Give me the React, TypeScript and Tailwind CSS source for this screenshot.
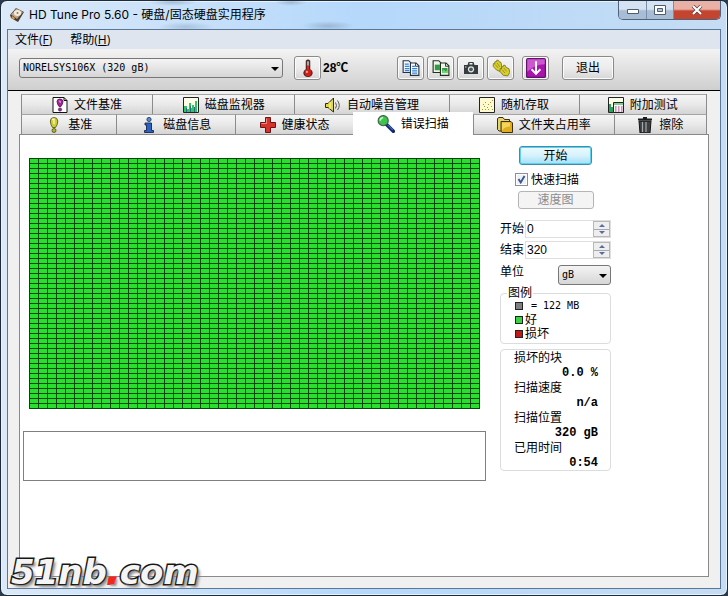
import { useState } from "react";
import type { ReactNode } from "react";

const toolButton =
  "flex items-center justify-center h-6 rounded-[3px] border border-[#8a8a8a] bg-linear-to-b from-[#f4f4f4] via-[#ececec] to-[#d6d6d6] shadow-[inset_0_0_0_1px_#fbfbfb]";

interface IconProps {
  children: ReactNode;
  size?: string;
}

function Icon({ children, size = "size-4" }: IconProps) {
  return (
    <svg viewBox="0 0 16 16" className={`${size} shrink-0`} aria-hidden="true">
      {children}
    </svg>
  );
}

const DiskIcon = () => (
  <Icon>
    <path d="M1 8 7 1l8 4-6 10-7-4z" fill="#4a3a30" />
    <path d="M2 7.500 7.500 1.500 14 5 8 12z" fill="#b9a58c" />
    <ellipse cx="8.500" cy="6" rx="3.600" ry="3" fill="#f4ead8" />
    <circle cx="8.500" cy="6" r="1" fill="#8d7c68" />
    <path d="m3 9 3 2-1 1.500L2.500 11z" fill="#e59a3a" />
  </Icon>
);

const ThermometerIcon = () => (
  <Icon size="size-[18px]">
    <path d="M6 1.500Q8-.5 10 1.500V9q2.200 1 2.200 3.500Q11.500 16 8 16t-4.200-3.500Q4 10 6 9z" fill="#4e2020" />
    <path d="M7 2h2v4H7z" fill="#a4a8ac" />
    <path d="M7 6h2v5H7z" fill="#d92c20" />
    <circle cx="8" cy="12.300" r="3.100" fill="#cf1f1a" />
    <circle cx="7" cy="11.500" r="1" fill="#ff9c8c" />
  </Icon>
);

const CopyTextIcon = () => (
  <Icon size="size-[18px]">
    <path d="M1 1.500h5l2 2V12H1z" fill="#f5faff" stroke="#26343f" />
    <path d="M2.500 4.500H6M2.500 6.500h4M2.500 8.500h4M2.500 10.300h4" stroke="#3482d8" />
    <path d="M7.500 3.500h5l2.500 2.500v8.500H7.500z" fill="#f5faff" stroke="#26343f" />
    <path d="M12 3.500v3h3" fill="none" stroke="#26343f" strokeWidth=".8" />
    <path d="M9 6.500h2.500M9 8.500h4.500M9 10.500h4.500M9 12.500h4.500" stroke="#3482d8" />
  </Icon>
);

const CopyImageIcon = () => (
  <Icon size="size-[18px]">
    <path d="M1 1.500h5l2 2V12H1z" fill="#eef7ee" stroke="#22301f" />
    <path d="M2.500 5h4.500v5H2.500z" fill="#339b43" />
    <path d="M7.500 3.500h5l2.500 2.500v8.500H7.500z" fill="#eef7ee" stroke="#22301f" />
    <path d="M12 3.500v3h3" fill="none" stroke="#22301f" strokeWidth=".8" />
    <path d="M9 8h4.800v4.500H9z" fill="#2f9a40" />
    <path d="m9 11 1.500-2 1.500 2 1.800-1.500v3H9z" fill="#77d26c" />
  </Icon>
);

const CameraIcon = () => (
  <Icon>
    <path d="M4.500 5 5.500 2h5l1 3H15v9H1V5z" fill="#373d3f" />
    <path d="M6.500 3h3v1.500h-3z" fill="#eef2f3" />
    <circle cx="8" cy="9.300" r="3.100" fill="#e4e9ea" />
    <circle cx="8" cy="9.300" r="1.900" fill="#4d5659" />
    <path d="M2 7h1.500" stroke="#cdd3d4" />
  </Icon>
);

const HandsIcon = () => (
  <Icon size="size-[18px]">
    <g fill="#d8cf2d" stroke="#706a14" strokeWidth=".7" strokeLinejoin="round">
      <path d="M1 6.500 1.300 4l1.200.3V2.500L4 2.300 4.300 1l1.500.2.700 1.300L8 3l1 5-2 3-3-1.200z" />
      <path d="M7 11 7.300 8.500l1.200.3V7l1.500-.2.300-1.300 1.500.2.700 1.800 2.500 1 .8 3.500L14 15l-4-.5z" />
    </g>
    <path d="m3 5 2.500 3M4.500 3.500 7 7M9 9.500l2.500 3M10.500 8l2.500 3" stroke="#8b841b" strokeWidth=".7" />
  </Icon>
);

const DownIcon = () => (
  <Icon size="size-5">
    <rect x=".5" y=".5" width="15" height="15" rx="1" fill="#a914ad" stroke="#62116b" />
    <path d="M1 1h14v4Q7 5 1 11z" fill="#cb58cf" />
    <path d="M8 2.500v10M4.500 9 8 12.700 11.500 9" fill="none" stroke="#fff" strokeWidth="1.600" />
  </Icon>
);

const FileBenchmarkIcon = () => (
  <Icon>
    <path d="M1 .5h11L15 3.500v12H1z" fill="#fff" stroke="#111" />
    <path d="M12 .5v3h3" fill="none" stroke="#111" />
    <path d="M8 2Q5 2 5 4.500 5.500 8 7 9.500h2Q10.800 7 11 4.500 10.800 2 8 2z" fill="#a3219e" stroke="#4b104d" strokeWidth=".8" />
    <circle cx="8" cy="12.500" r="1.600" fill="#a3219e" stroke="#4b104d" strokeWidth=".7" />
    <path d="M6.700 4h1.500v2" fill="none" stroke="#e9a2e5" />
  </Icon>
);

const MonitorIcon = () => (
  <Icon>
    <path d="M.5.5h15v15H.5z" fill="#fbfde8" stroke="#222" />
    <path d="M1 15V9h3v3h2V6h2v5h1V8h2v3h1V4h2v11z" fill="#35c267" />
    <path d="M3 15v-4h1v4zm4 0V9h1v6zm4 0v-5h1v5z" fill="#23707e" />
  </Icon>
);

const SpeakerIcon = () => (
  <Icon>
    <path d="M.5 6.500H3L8.500 1v14L3 10.500H.5z" fill="#e1d842" stroke="#2c2a0c" strokeLinejoin="round" />
    <path d="M5 5v7" stroke="#fffb9c" />
    <path d="M10.500 5.500q2 3 0 6M12.500 3.500q3.500 5 0 9.500" fill="none" stroke="#555" />
  </Icon>
);

const RandomIcon = () => (
  <Icon>
    <path d="M.5.5h15v15H.5z" fill="#fdfad0" stroke="#222" />
    <path
      d="M3 12h1v1H3zm2-3h1v1H5zm1 3h1v1H6zm2-2h1v1H8zm1 2h1v1H9zm-5-5h1v1H4zm5 0h1v1H9zm2-2h1v1h-1zm2-2h1v1h-1zm-1 6h1v1h-1zm1 3h1v1h-1zM6 5h1v1H6z"
      fill="#b39435"
    />
  </Icon>
);

const ExtraIcon = () => (
  <Icon>
    <path d="M.5.500h15v15H.5z" fill="#fbfde8" stroke="#222" />
    <path d="M1 7h2v3h2v5H1z" fill="#28a35b" />
    <path d="M5.500 5.500h10v10h-10z" fill="#f8f1f5" stroke="#222" />
    <path d="M6 6h9v2H6z" fill="#7bcd93" />
    <path d="M7 10h1.500M10 10h1.500M13 10h1.500M7 12h1.500M10 12h1.500M13 12h1.500M7 14h1.500M10 14h1.500M13 14h1.500" stroke="#a33b78" />
  </Icon>
);

const BenchmarkIcon = () => (
  <Icon>
    <path d="M8 .500Q4.500.5 4.300 4 4.600 8 6.500 10.500h3Q11.600 8 11.800 4 11.500.5 8 .500z" fill="#cfce36" stroke="#4b4a12" strokeWidth=".8" />
    <path d="M6 2.500 8 2v5" fill="none" stroke="#fbfbb0" strokeWidth="1.300" />
    <circle cx="8" cy="13.500" r="2" fill="#b3b22c" stroke="#4b4a12" strokeWidth=".8" />
  </Icon>
);

const InfoIcon = () => (
  <Icon>
    <circle cx="8" cy="2.500" r="2.100" fill="#4a93d8" stroke="#172c49" strokeWidth=".8" />
    <path d="M4 6h6.500v7.500h2v2h-9v-2h2V8H4z" fill="#2a62c2" stroke="#14274d" strokeWidth=".9" />
  </Icon>
);

const HealthIcon = () => (
  <Icon>
    <path d="M5.500.5h5v5h5v5h-5v5h-5v-5h-5v-5h5z" fill="#d8312c" stroke="#6b1513" />
    <path d="M6.500 1.500v5h-5" fill="none" stroke="#f28a80" />
  </Icon>
);

const SearchIcon = () => (
  <Icon size="size-[18px]">
    <path d="m8.500 8.500 6 6" stroke="#152a6c" strokeWidth="3.200" strokeLinecap="round" />
    <path d="m9.500 8.800 4.500 4.500" stroke="#4268cc" />
    <circle cx="5.500" cy="5" r="4.500" fill="#3fc44c" stroke="#3b634b" />
    <path d="M2.800 5Q3 2.500 5.500 2.200" fill="none" stroke="#c6f8c3" strokeWidth="1.500" />
  </Icon>
);

const FolderIcon = () => (
  <Icon>
    <path d="M.5 1.500 2 .5h4l1.500 2h5v11.500H2L.5 12.500z" fill="#e6d26e" stroke="#3a300b" />
    <path d="M4 4.500h10l1.500 1.500v9.500H5L4 14z" fill="#e0ad1f" stroke="#3a300b" />
    <path d="M5 5.500h8v4q-5 0-8 4z" fill="#f4d45a" />
  </Icon>
);

const TrashIcon = () => (
  <Icon>
    <path d="M1 2.500h14M6 1h4" stroke="#1c1c1c" strokeWidth="2" />
    <path d="M2 4h12l-1 12H3z" fill="#3d4042" stroke="#151515" />
    <path d="M5.500 5v10M9 5v10" stroke="#a7abad" strokeWidth="1.200" />
  </Icon>
);

const fileTabs = [
  { label: "文件基准", icon: <FileBenchmarkIcon />, grow: "flex-[131]" },
  { label: "磁盘监视器", icon: <MonitorIcon />, grow: "flex-[142]" },
  { label: "自动噪音管理", icon: <SpeakerIcon />, grow: "flex-[154]" },
  { label: "随机存取", icon: <RandomIcon />, grow: "flex-[130]" },
  { label: "附加测试", icon: <ExtraIcon />, grow: "flex-[127]" },
];

const diskTabs = [
  { label: "基准", icon: <BenchmarkIcon />, grow: "flex-[95]" },
  { label: "磁盘信息", icon: <InfoIcon />, grow: "flex-[119]" },
  { label: "健康状态", icon: <HealthIcon />, grow: "flex-[117]" },
  { label: "错误扫描", icon: <SearchIcon />, grow: "flex-[121]", active: true },
  { label: "文件夹占用率", icon: <FolderIcon />, grow: "flex-[141]" },
  { label: "擦除", icon: <TrashIcon />, grow: "flex-[92]" },
];

interface TabProps {
  label: string;
  icon: ReactNode;
  grow: string;
  active?: boolean;
}

function Tab({ label, icon, grow, active }: TabProps) {
  const look = active
    ? "relative z-10 -mt-0.5 -mb-px bg-white"
    : "border-t border-l border-[#8b8b8b] border-t-[#a5a5a5] bg-linear-to-b from-[#f5f5f5] via-[#e9e9e9] to-[#d4d4d4]";
  return (
    <button
      type="button"
      role="tab"
      aria-selected={!!active}
      className={`flex items-center justify-center gap-1.5 whitespace-nowrap ${grow} ${look}`}
    >
      {icon}
      {label}
    </button>
  );
}

function DropArrow() {
  return (
    <svg viewBox="0 0 8 4" className="pointer-events-none absolute right-1 top-1/2 -mt-px h-1 w-2" aria-hidden="true">
      <path d="M0 0h8L4 4z" fill="#000" />
    </svg>
  );
}

interface SpinFieldProps {
  id: string;
  label: string;
  initial: number;
}

function SpinField({ id, label, initial }: SpinFieldProps) {
  const [value, setValue] = useState(initial);
  return (
    <div className="flex h-[18px] items-center">
      <label htmlFor={id} className="w-[25px] shrink-0 whitespace-nowrap">
        {label}
      </label>
      <div className="flex h-full min-w-0 flex-1 border border-[#dedede] bg-white">
        <input
          id={id}
          value={value}
          onChange={(e) => setValue(Number(e.target.value) || 0)}
          className="min-w-0 flex-1 px-px font-['Liberation_Sans',sans-serif] outline-none"
        />
        <div className="flex w-[17px] flex-col border border-[#b8b8b8] bg-[#eeeeee]">
          <button
            type="button"
            aria-label={`${label} +`}
            onClick={() => setValue(value + 1)}
            className="flex flex-1 items-center justify-center border-b border-[#a5a8b2]"
          >
            <svg viewBox="0 0 6 3" className="h-[3px] w-1.5">
              <path d="M0 3h6L3 0z" fill="#5a6c98" />
            </svg>
          </button>
          <button
            type="button"
            aria-label={`${label} -`}
            onClick={() => setValue(Math.max(0, value - 1))}
            className="flex flex-1 items-center justify-center"
          >
            <svg viewBox="0 0 6 3" className="h-[3px] w-1.5">
              <path d="M0 0h6L3 3z" fill="#5a6c98" />
            </svg>
          </button>
        </div>
      </div>
    </div>
  );
}

function TitleBar() {
  return (
    <header className="flex h-7 items-start justify-between rounded-t-[6px] bg-[radial-gradient(ellipse_28px_5px_at_185px_26px,#7c95b166,transparent),radial-gradient(ellipse_26px_5px_at_327px_25px,#7c95b180,transparent),radial-gradient(ellipse_24px_4px_at_172px_1px,#7c95b180,transparent),radial-gradient(ellipse_16px_4px_at_290px_1px,#7c95b180,transparent)]">
      <h1 className="flex h-7 items-center gap-1 pl-2 font-['Inter','Noto_Sans_CJK_SC',sans-serif] text-xs">
        <DiskIcon />
        HD Tune Pro 5.60 - 硬盘/固态硬盘实用程序
      </h1>
      <div className="mr-1.5 flex h-[19px] w-[103px] overflow-hidden rounded-b-[5px] border border-t-0 border-[#4f6279]">
        <button
          type="button"
          aria-label="最小化"
          className="flex flex-[28] items-center justify-center border-r border-[#7c8ea5] bg-linear-to-b from-[#d5e2f1] from-45% to-[#a7bcd5] to-55%"
        >
          <svg viewBox="0 0 14 10" className="h-2.5 w-3.5">
            <path d="M1.500 4.500h11v4h-11z" fill="#fff" stroke="#515c6b" />
          </svg>
        </button>
        <button
          type="button"
          aria-label="最大化"
          className="flex flex-[26] items-center justify-center border-r border-[#7c8ea5] bg-linear-to-b from-[#d5e2f1] from-45% to-[#a7bcd5] to-55%"
        >
          <svg viewBox="0 0 12 10" className="h-2.5 w-3">
            <path d="M.5.5h11v9H.5z" fill="#fff" stroke="#515c6b" />
            <path d="M3.500 3.500h5v3h-5z" fill="#b5c7dc" stroke="#515c6b" />
          </svg>
        </button>
        <button
          type="button"
          aria-label="关闭"
          className="flex flex-[47] items-center justify-center bg-linear-to-b from-[#e9b1a6] from-45% to-[#c4452f] to-55%"
        >
          <svg viewBox="0 0 12 10" className="h-2.5 w-3">
            <path d="m2 1 8 8m0-8L2 9" stroke="#5b3b3b" strokeWidth="3.600" />
            <path d="m2 1 8 8m0-8L2 9" stroke="#fff" strokeWidth="2.200" />
          </svg>
        </button>
      </div>
    </header>
  );
}

function Toolbar() {
  return (
    <div className="flex h-[42px] items-center border-b border-black bg-linear-to-b from-[#f3f3f3] to-[#cfcfcf] pb-1 pl-[11px]">
      <div className="relative h-5 w-[264px]">
        <select
          aria-label="磁盘"
          className="h-full w-full appearance-none rounded-[3px] border border-[#777] bg-linear-to-b from-[#f4f4f4] to-[#d6d6d6] px-[3px] font-['DejaVu_Sans_Mono',monospace] text-[10px]"
        >
          <option>NORELSYS106X (320 gB)</option>
        </select>
        <DropArrow />
      </div>
      <button type="button" aria-label="温度" className={`${toolButton} ml-[11px] w-[27px]`}>
        <ThermometerIcon />
      </button>
      <span className="ml-0.5 w-[74px] font-['Liberation_Sans','Noto_Sans_CJK_SC',sans-serif] font-bold">28℃</span>
      <div className="flex gap-[3px]">
        <button type="button" aria-label="复制文本" className={`${toolButton} w-[27px]`}>
          <CopyTextIcon />
        </button>
        <button type="button" aria-label="复制图像" className={`${toolButton} w-[27px]`}>
          <CopyImageIcon />
        </button>
        <button type="button" aria-label="截图" className={`${toolButton} w-[27px]`}>
          <CameraIcon />
        </button>
        <button type="button" aria-label="捐助" className={`${toolButton} w-[27px]`}>
          <HandsIcon />
        </button>
      </div>
      <button type="button" aria-label="下载" className={`${toolButton} ml-2 w-[27px]`}>
        <DownIcon />
      </button>
      <button type="button" className={`${toolButton} ml-[13px] w-[52px]`}>
        退出
      </button>
    </div>
  );
}

function BlockMap() {
  return (
    <svg viewBox="0 0 451 251" preserveAspectRatio="none" className="h-[251px] w-full" role="img" aria-label="错误扫描">
      <defs>
        <pattern id="block" width="9" height="5" patternUnits="userSpaceOnUse">
          <rect width="9" height="5" fill="#0b430d" />
          <rect x="1" y="1" width="8" height="4" fill="#27e02b" />
        </pattern>
      </defs>
      <rect width="451" height="251" fill="url(#block)" />
    </svg>
  );
}

const legend = [
  { text: "= 122 MB", color: "bg-[#808080]", style: "pl-1.5 font-['DejaVu_Sans_Mono',monospace] text-[10px]" },
  { text: "好", color: "bg-[#35d63b]", style: "" },
  { text: "损坏", color: "bg-[#c01a14]", style: "" },
];

const stats = [
  { label: "损坏的块", value: "0.0 %" },
  { label: "扫描速度", value: "n/a" },
  { label: "扫描位置", value: "320 gB" },
  { label: "已用时间", value: "0:54" },
];

function ScanControls() {
  return (
    <div className="flex w-[111px] shrink-0 flex-col pt-[11px]">
      <button
        type="button"
        className="h-[19px] w-[73px] self-center rounded-[3px] border border-[#3b8fae] bg-linear-to-b from-[#eefaff] via-[#d5f2fd] to-[#a5def4] shadow-[inset_0_0_0_1px_#5fd0ee]"
      >
        开始
      </button>
      <label className="mt-1.5 flex h-[17px] items-center gap-[3px] pl-[15px]">
        <span className="relative flex">
          <input
            type="checkbox"
            defaultChecked
            className="peer size-[13px] appearance-none border border-[#8b8f94] bg-[#eef0f3] shadow-[inset_0_0_0_1px_#fff]"
          />
          <svg viewBox="0 0 13 13" className="pointer-events-none absolute inset-0 hidden size-[13px] peer-checked:block">
            <path d="m3.500 6 2.200 3.500L9.500 3" fill="none" stroke="#3a5596" strokeWidth="1.900" />
          </svg>
        </span>
        快速扫描
      </label>
      <button
        type="button"
        disabled
        className="mt-[3px] h-[18px] w-[76px] self-center rounded-[3px] border border-[#b5b5b5] bg-[#f4f4f4] text-[#8c8c8c]"
      >
        速度图
      </button>
      <div className="mt-[11px] flex flex-col gap-[3px]">
        <SpinField id="start" label="开始" initial={0} />
        <SpinField id="end" label="结束" initial={320} />
      </div>
      <div className="mt-1.5 flex items-start justify-between">
        <label htmlFor="unit" className="leading-[14px]">
          单位
        </label>
        <div className="relative h-5 w-[53px]">
          <select
            id="unit"
            className="h-full w-full appearance-none rounded-[3px] border border-[#777] bg-linear-to-b from-[#f4f4f4] to-[#d6d6d6] px-[3px] font-['DejaVu_Sans_Mono',monospace] text-[10px]"
          >
            <option>gB</option>
            <option>MB</option>
          </select>
          <DropArrow />
        </div>
      </div>
      <fieldset className="mt-0.5 rounded-[4px] border border-[#d9dde0] pb-0.5 pl-3.5">
        <legend className="-ml-2 px-px leading-3">图例</legend>
        <ul>
          {legend.map((item) => (
            <li key={item.text} className="flex h-3.5 items-center gap-0.5">
              <span className={`size-2 border border-[#222] ${item.color}`} />
              <span className={`whitespace-pre leading-[14px] ${item.style}`}>{item.text}</span>
            </li>
          ))}
        </ul>
      </fieldset>
      <dl className="mt-[5px] flex flex-col gap-px rounded-[4px] border border-[#d9dde0] pt-px pr-3 pl-[13px] leading-[15px]">
        {stats.map((item) => (
          <div key={item.label}>
            <dt>{item.label}</dt>
            <dd className="h-[14px] text-right font-['Liberation_Mono',monospace] font-bold">{item.value}</dd>
          </div>
        ))}
      </dl>
    </div>
  );
}

export default function App() {
  return (
    <div className="min-h-screen bg-[#2c3b4c]">
      <div className="relative flex min-h-screen flex-col rounded-[7px] border border-[#1d2b3a] bg-linear-to-r from-[#dbe9f8] via-[#b5d8fb] to-[#c5dcf3] font-['Liberation_Sans','Noto_Sans_CJK_SC',sans-serif] text-xs text-black shadow-[inset_0_0_0_1px_#e6f2fc]">
        <TitleBar />
        <main className="mx-1.5 mb-1.5 flex flex-1 flex-col border border-[#5a7896] bg-[#f0f0f0]">
          <nav className="flex h-[19px] items-center gap-[18px] bg-[#dfe5ee] pl-[7px] font-['Open_Sans','Noto_Sans_CJK_SC',sans-serif]">
            <button type="button">
              文件(<u>F</u>)
            </button>
            <button type="button">
              帮助(<u>H</u>)
            </button>
          </nav>
          <Toolbar />
          <div className="flex flex-1 flex-col px-[11px] pt-[3px] pb-[11px]">
            <div role="tablist" className="mx-0.5">
              <div className="flex h-5 border-r border-[#8b8b8b]">
                {fileTabs.map((tab) => (
                  <Tab key={tab.label} {...tab} />
                ))}
              </div>
              <div className="flex h-5 border-r border-[#8b8b8b]">
                {diskTabs.map((tab) => (
                  <Tab key={tab.label} {...tab} />
                ))}
              </div>
            </div>
            <section className="flex flex-1 gap-3.5 border border-[#8a8a8a] bg-white pr-[97px] pl-[3px]">
              <div className="min-w-0 flex-1 pt-[23px]">
                <div className="mx-1.5">
                  <BlockMap />
                </div>
                <div className="mt-[22px] h-[50px] border border-[#808080]" />
              </div>
              <ScanControls />
            </section>
          </div>
        </main>
        <div className="pointer-events-none absolute bottom-0 left-2.5 font-['DejaVu_Sans',sans-serif] text-[34px] leading-[46px] font-bold text-[#f4f4f4] italic [-webkit-text-stroke:3px_#161616] [paint-order:stroke_fill] [text-shadow:1px_1px_0_#222,3px_3px_3px_#888]">
          51nb<span className="text-[#f3261c] [-webkit-text-stroke:2px_#f3261c] [text-shadow:2px_2px_2px_#999]">.</span>com
        </div>
      </div>
    </div>
  );
}
